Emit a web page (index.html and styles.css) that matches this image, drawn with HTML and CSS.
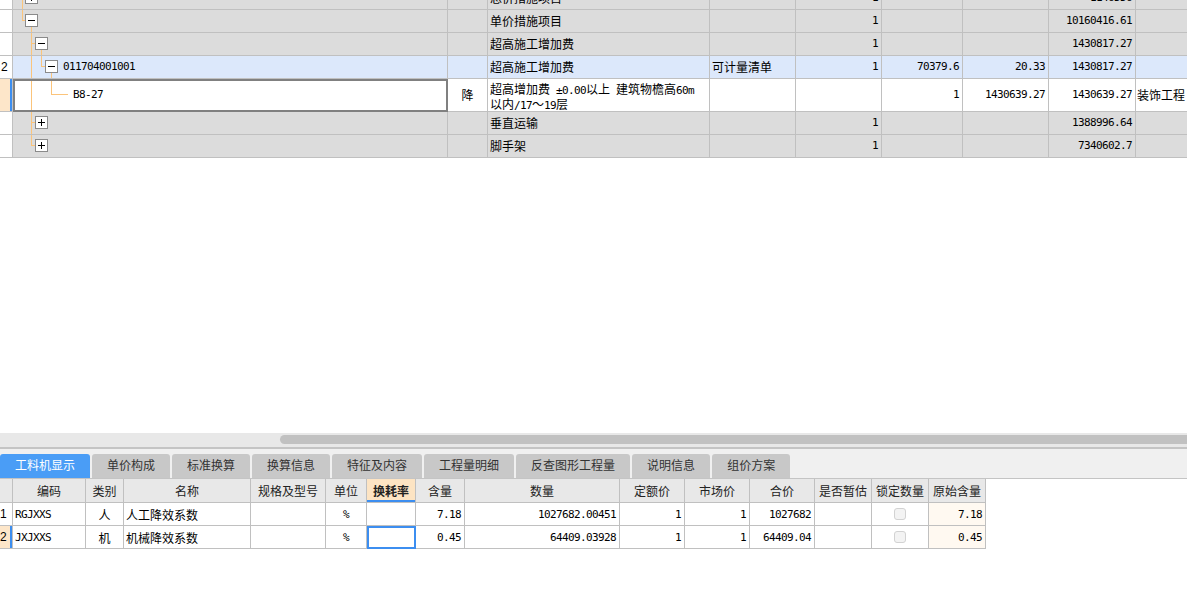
FILE: index.html
```html
<!DOCTYPE html>
<html lang="zh-CN">
<head>
<meta charset="utf-8">
<title>工料机显示</title>
<link rel="stylesheet" href="styles.css">
</head>
<body>
<div class="app">
  <div class="top-pane">
    <div class="tgrid">
      <div class="trow">
        <div class="rn"></div>
        <div class="tree"><svg width="26" height="22" class="tv"><g class="ln"><line x1="9.5" y1="0" x2="9.5" y2="22"/><line x1="9" y1="10.5" x2="12" y2="10.5"/></g><rect class="bx" x="12.5" y="4.5" width="12" height="12"/><path class="gl" d="M15 10.5h7M18.5 7v7"/></svg></div>
        <div class="c"></div>
        <div>总价措施项目</div>
        <div></div>
        <div class="r m">1</div>
        <div></div>
        <div></div>
        <div class="r m">1146556</div>
        <div></div>
      </div>
      <div class="trow">
        <div class="rn"></div>
        <div class="tree"><svg width="26" height="22" class="tv"><g class="ln"><line x1="9.5" y1="0" x2="9.5" y2="10.5"/><line x1="9" y1="10.5" x2="12" y2="10.5"/><line x1="18.5" y1="17" x2="18.5" y2="22"/></g><rect class="bx" x="12.5" y="4.5" width="12" height="12"/><path class="gl" d="M15 10.5h7"/></svg></div>
        <div class="c"></div>
        <div>单价措施项目</div>
        <div></div>
        <div class="r m">1</div>
        <div></div>
        <div></div>
        <div class="r m">10160416.61</div>
        <div></div>
      </div>
      <div class="trow">
        <div class="rn"></div>
        <div class="tree"><svg width="36" height="22" class="tv"><g class="ln"><line x1="18.5" y1="0" x2="18.5" y2="22"/><line x1="18" y1="10.5" x2="22" y2="10.5"/><line x1="28.5" y1="17" x2="28.5" y2="22"/></g><rect class="bx" x="22.5" y="4.5" width="12" height="12"/><path class="gl" d="M25 10.5h7"/></svg></div>
        <div class="c"></div>
        <div>超高施工增加费</div>
        <div></div>
        <div class="r m">1</div>
        <div></div>
        <div></div>
        <div class="r m">1430817.27</div>
        <div></div>
      </div>
      <div class="trow sel">
        <div class="rn">2</div>
        <div class="tree"><svg width="46" height="22" class="tv"><g class="ln"><line x1="18.5" y1="0" x2="18.5" y2="22"/><line x1="28.5" y1="0" x2="28.5" y2="10.5"/><line x1="28" y1="10.5" x2="32" y2="10.5"/><line x1="38.5" y1="17" x2="38.5" y2="22"/></g><rect class="bx" x="32.5" y="4.5" width="12" height="12"/><path class="gl" d="M35 10.5h7"/></svg><span class="m code">011704001001</span></div>
        <div class="c"></div>
        <div>超高施工增加费</div>
        <div>可计量清单</div>
        <div class="r m">1</div>
        <div class="r m">70379.6</div>
        <div class="r m">20.33</div>
        <div class="r m">1430817.27</div>
        <div></div>
      </div>
      <div class="trow cur">
        <div class="rn"></div>
        <div class="tree edit"><svg width="56" height="32" class="tv"><g class="ln"><line x1="18.5" y1="0" x2="18.5" y2="32"/><line x1="38.5" y1="0" x2="38.5" y2="15.5"/><line x1="38" y1="15.5" x2="55" y2="15.5"/></g></svg><span class="m code">B8-27</span></div>
        <div class="c">降</div>
        <div class="wrap">超高增加费<span class="m"> ±0.00</span>以上<span class="m"> </span>建筑物檐高<span class="m">60m</span><br>以内<span class="m">/17</span>～<span class="m">19</span>层</div>
        <div></div>
        <div></div>
        <div class="r m">1</div>
        <div class="r m">1430639.27</div>
        <div class="r m">1430639.27</div>
        <div class="lft">装饰工程</div>
      </div>
      <div class="trow">
        <div class="rn"></div>
        <div class="tree"><svg width="36" height="22" class="tv"><g class="ln"><line x1="18.5" y1="0" x2="18.5" y2="22"/><line x1="18" y1="10.5" x2="22" y2="10.5"/></g><rect class="bx" x="22.5" y="4.5" width="12" height="12"/><path class="gl" d="M25 10.5h7M28.5 7v7"/></svg></div>
        <div class="c"></div>
        <div>垂直运输</div>
        <div></div>
        <div class="r m">1</div>
        <div></div>
        <div></div>
        <div class="r m">1388996.64</div>
        <div></div>
      </div>
      <div class="trow">
        <div class="rn"></div>
        <div class="tree"><svg width="36" height="22" class="tv"><g class="ln"><line x1="18.5" y1="0" x2="18.5" y2="10.5"/><line x1="18" y1="10.5" x2="22" y2="10.5"/></g><rect class="bx" x="22.5" y="4.5" width="12" height="12"/><path class="gl" d="M25 10.5h7M28.5 7v7"/></svg></div>
        <div class="c"></div>
        <div>脚手架</div>
        <div></div>
        <div class="r m">1</div>
        <div></div>
        <div></div>
        <div class="r m">7340602.7</div>
        <div></div>
      </div>
    </div>
  </div>

  <div class="hscroll"><div class="thumb"></div></div>
  <div class="splitter"></div>

  <div class="tabbar">
    <div class="tab active">工料机显示</div>
    <div class="tab">单价构成</div>
    <div class="tab">标准换算</div>
    <div class="tab">换算信息</div>
    <div class="tab">特征及内容</div>
    <div class="tab">工程量明细</div>
    <div class="tab">反查图形工程量</div>
    <div class="tab">说明信息</div>
    <div class="tab">组价方案</div>
  </div>

  <div class="bgrid">
    <div class="brow head">
      <div class="rn"></div>
      <div>编码</div>
      <div>类别</div>
      <div>名称</div>
      <div>规格及型号</div>
      <div>单位</div>
      <div class="hl">换耗率</div>
      <div>含量</div>
      <div>数量</div>
      <div>定额价</div>
      <div>市场价</div>
      <div>合价</div>
      <div>是否暂估</div>
      <div>锁定数量</div>
      <div>原始含量</div>
    </div>
    <div class="brow">
      <div class="rn">1</div>
      <div class="m">RGJXXS</div>
      <div class="c">人</div>
      <div>人工降效系数</div>
      <div></div>
      <div class="c m">%</div>
      <div></div>
      <div class="r m">7.18</div>
      <div class="r m">1027682.00451</div>
      <div class="r m">1</div>
      <div class="r m">1</div>
      <div class="r m">1027682</div>
      <div></div>
      <div class="c"><span class="chk"></span></div>
      <div class="r m orig">7.18</div>
    </div>
    <div class="brow cur">
      <div class="rn">2</div>
      <div class="m">JXJXXS</div>
      <div class="c">机</div>
      <div>机械降效系数</div>
      <div></div>
      <div class="c m">%</div>
      <div class="focus"></div>
      <div class="r m">0.45</div>
      <div class="r m">64409.03928</div>
      <div class="r m">1</div>
      <div class="r m">1</div>
      <div class="r m">64409.04</div>
      <div></div>
      <div class="c"><span class="chk"></span></div>
      <div class="r m orig">0.45</div>
    </div>
  </div>
</div>
</body>
</html>
```

FILE: styles.css
```css
html, body {
  margin: 0;
  padding: 0;
  background: #ffffff;
}
body {
  font-family: "Noto Sans CJK SC", "Noto Sans", sans-serif;
  font-size: 12px;
  color: #000;
}
.app {
  height: 613px;
  display: flex;
  flex-direction: column;
  overflow: hidden;
}

/* ---------- top tree grid ---------- */
.top-pane {
  flex: none;
  height: 433px;
  overflow: hidden;
}
.tgrid {
  margin-top: -13px; /* scroll offset */
}
.trow {
  display: grid;
  grid-template-columns: 13px 435px 40px 222px 86px 86px 81px 86px 87px 1fr;
  height: 23px;
  background: #dcdcdc;
}
.trow > div {
  box-sizing: border-box;
  border-right: 1px solid #c0c0c0;
  border-bottom: 1px solid #c0c0c0;
  display: flex;
  align-items: center;
  overflow: hidden;
  white-space: nowrap;
  padding: 0 2px;
  line-height: 14px;
}
.trow > div:last-child {
  border-right: none;
}
.trow.sel {
  background: #dce8fb;
}
.trow.cur {
  height: 33px;
  background: #ffffff;
}
.trow .rn {
  background: #ffffff;
  padding: 0 0 0 1px;
  font-family: "Liberation Sans", sans-serif;
  font-size: 12px;
}
.trow.cur .rn {
  background: #fde6c9;
  box-shadow: inset -2px 0 0 #3c8ef0;
}
.trow .tree {
  padding: 0;
}
.tv {
  display: block;
  flex: none;
  shape-rendering: crispEdges;
}
.tv .ln line {
  stroke: #fbc47b;
  stroke-width: 1;
}
.tv .bx {
  fill: #ffffff;
  stroke: #8a8a8a;
  stroke-width: 1;
}
.tv .gl {
  stroke: #000;
  stroke-width: 1;
  fill: none;
}
.code {
  margin-left: 4px;
}
.tree.edit {
  outline: 2px solid #808080;
  outline-offset: -2px;
}
.trow > .wrap {
  white-space: normal;
  line-height: 13px;
  display: block;
  padding-top: 3px;
}
.c {
  justify-content: center;
  text-align: center;
}
.r {
  justify-content: flex-end;
  text-align: right;
}
.trow > .r {
  padding-right: 3px;
}
.trow > .lft {
  padding-left: 1px;
}
.m {
  font-family: "DejaVu Sans Mono", "Liberation Mono", monospace;
  font-size: 11px;
  letter-spacing: -0.62px;
}

/* ---------- scrollbar / splitter ---------- */
.hscroll {
  flex: none;
  height: 14px;
  background: #e8e8e8;
  box-sizing: border-box;
  padding: 2px 0 0 280px;
}
.thumb {
  height: 9px;
  background: #c1c1c1;
  border-radius: 5px 0 0 5px;
}
.splitter {
  flex: none;
  height: 2px;
  background: #c4c4c4;
}

/* ---------- tabs ---------- */
.tabbar {
  flex: none;
  height: 29px;
  background: #f0f0f0;
  border-bottom: 1px solid #c4c4c4;
  display: flex;
  align-items: flex-end;
  gap: 2px;
}
.tab {
  height: 24px;
  line-height: 22px;
  padding: 0 15px;
  background: #c8c8c8;
  color: #333;
  border-radius: 3px 3px 0 0;
  white-space: nowrap;
}
.tab.active {
  background: #4a9df6;
  color: #ffffff;
}

/* ---------- bottom grid ---------- */
.bgrid {
  flex: none;
  width: 986px;
}
.brow {
  display: grid;
  grid-template-columns: 13px 73px 38px 127px 75px 41px 49px 49px 155px 65px 65px 65px 57px 57px 57px;
  height: 23px;
  background: #ffffff;
}
.brow.head {
  height: 24px;
  background: #e8e8e8;
  color: #222;
}
.brow > div {
  box-sizing: border-box;
  border-right: 1px solid #c0c0c0;
  border-bottom: 1px solid #c0c0c0;
  display: flex;
  align-items: center;
  overflow: hidden;
  white-space: nowrap;
  padding: 0 2px;
}
.brow.head > div {
  justify-content: center;
}
.brow.head > .hl {
  background: #fde4c3;
  font-weight: bold;
  box-shadow: inset 0 -2px 0 #3c8ef0;
}
.brow > .r {
  padding-right: 3px;
}
.brow .rn {
  padding: 0;
  font-family: "Liberation Sans", sans-serif;
}
.brow.cur .rn {
  background: #fde6c9;
  box-shadow: inset -2px 0 0 #3c8ef0;
}
.brow .orig {
  background: #fff9f1;
}
.brow .focus {
  outline: 2px solid #3c8ef0;
  outline-offset: -2px;
}
.chk {
  width: 12px;
  height: 12px;
  box-sizing: border-box;
  border: 1px solid #d2d2d2;
  border-radius: 3px;
  background: #f3f3f3;
}
```
